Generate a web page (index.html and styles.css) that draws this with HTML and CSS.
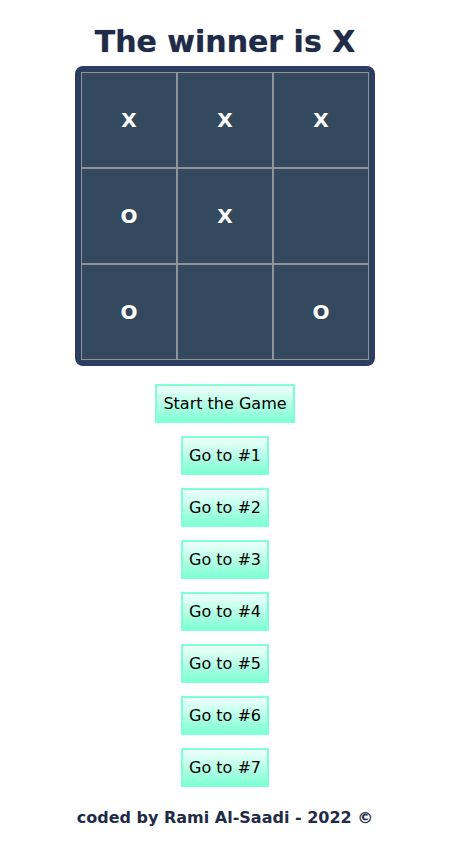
FILE: index.html
```html
<!DOCTYPE html>
<html>
<head>
<meta charset="utf-8">
<link rel="stylesheet" href="styles.css">
</head>
<body>
<div class="app">
  <h1 class="title">The winner is X</h1>
  <div class="board">
    <div class="cell">X</div>
    <div class="cell">X</div>
    <div class="cell">X</div>
    <div class="cell">O</div>
    <div class="cell">X</div>
    <div class="cell"></div>
    <div class="cell">O</div>
    <div class="cell"></div>
    <div class="cell">O</div>
  </div>
  <div class="moves">
    <button class="btn">Start the Game</button>
    <button class="btn">Go to #1</button>
    <button class="btn">Go to #2</button>
    <button class="btn">Go to #3</button>
    <button class="btn">Go to #4</button>
    <button class="btn">Go to #5</button>
    <button class="btn">Go to #6</button>
    <button class="btn">Go to #7</button>
  </div>
  <p class="footer">coded by Rami Al-Saadi - 2022 ©</p>
</div>
</body>
</html>
```
FILE: styles.css
```css
body {
  margin: 0;
  font-family: "DejaVu Sans", sans-serif;
  background: #fff;
}
.app {
  display: flex;
  flex-direction: column;
  align-items: center;
}
.title {
  margin: 24px 0 6px;
  font-size: 30px;
  line-height: 36px;
  font-weight: bold;
  color: #1f2b47;
  text-shadow: 0 0 1px rgba(31, 43, 71, 0.6);
}
.board {
  display: grid;
  grid-template-columns: repeat(3, 96px);
  grid-template-rows: repeat(3, 96px);
  border: 6px solid #2c3e5f;
  border-radius: 8px;
  background: #34495e;
}
.cell {
  box-sizing: border-box;
  border: 1px solid #8e9499;
  background: #34495e;
  color: #fff;
  font-weight: bold;
  font-size: 20px;
  display: flex;
  align-items: center;
  justify-content: center;
}
.moves {
  display: flex;
  flex-direction: column;
  align-items: center;
  gap: 13px;
  margin-top: 18px;
}
.btn {
  box-sizing: border-box;
  height: 39px;
  padding: 0 6px;
  border: 2px solid #7fffd4;
  background: linear-gradient(to bottom, #f0fffb, #7fffd4);
  font-family: "DejaVu Sans", sans-serif;
  font-size: 16px;
  color: #000;
}
.footer {
  margin: 21px 0 0;
  font-size: 16px;
  font-weight: bold;
  color: #1f2b47;
}
```
